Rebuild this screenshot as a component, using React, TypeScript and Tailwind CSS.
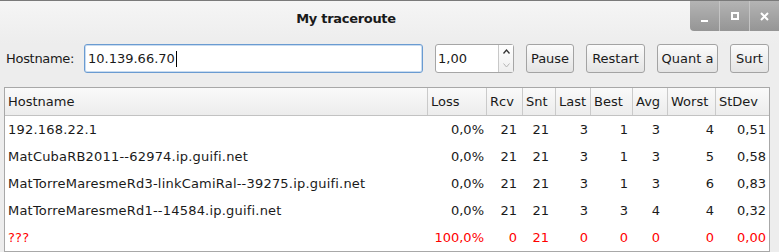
import React from 'react';

const columns = [
  { label: 'Hostname', w: 'w-[423px]', pr: '' },
  { label: 'Loss', w: 'w-[59px]', pr: 'pr-[3px]' },
  { label: 'Rcv', w: 'w-[36px]', pr: 'pr-[6px]' },
  { label: 'Snt', w: 'w-[33px]', pr: 'pr-[7px]' },
  { label: 'Last', w: 'w-[35px]', pr: 'pr-[3px]' },
  { label: 'Best', w: 'w-[42px]', pr: 'pr-[5px]' },
  { label: 'Avg', w: 'w-[35px]', pr: 'pr-[8px]' },
  { label: 'Worst', w: 'w-[48px]', pr: 'pr-[2px]' },
  { label: 'StDev', w: 'w-[53px]', pr: 'pr-[3px]' },
];

const rows = [
  { host: '192.168.22.1', vals: ['0,0%', '21', '21', '3', '1', '3', '4', '0,51'] },
  { host: 'MatCubaRB2011--62974.ip.guifi.net', vals: ['0,0%', '21', '21', '3', '1', '3', '5', '0,58'] },
  { host: 'MatTorreMaresmeRd3-linkCamiRal--39275.ip.guifi.net', vals: ['0,0%', '21', '21', '3', '1', '3', '6', '0,83'] },
  { host: 'MatTorreMaresmeRd1--14584.ip.guifi.net', vals: ['0,0%', '21', '21', '3', '3', '4', '4', '0,32'] },
  { host: '???', vals: ['100,0%', '0', '21', '0', '0', '0', '0', '0,00'], lost: true },
];

const buttons = [
  { label: 'Pause', w: 'w-[48px]' },
  { label: 'Restart', w: 'w-[59px]' },
  { label: 'Quant a', w: 'w-[61px]' },
  { label: 'Surt', w: 'w-[39px]' },
];

const WindowControls: React.FC = () => (
  <div className="flex h-[30px] w-[89px] rounded-bl-[4px] bg-gradient-to-b from-[#b4b4b4] to-[#959595] text-white">
    <div className="flex w-[30px] items-end justify-center border-r border-[#c4c4c4] pb-[9px]">
      <div className="h-[2px] w-[7px] bg-white" />
    </div>
    <div className="flex w-[30px] items-center justify-center border-r border-[#c4c4c4]">
      <div className="h-[8px] w-[8px] border-2 border-white" />
    </div>
    <div className="flex flex-1 items-center justify-center">
      <svg width="9" height="9" viewBox="0 0 9 9">
        <path d="M1 1L8 8M8 1L1 8" stroke="white" strokeWidth="2" />
      </svg>
    </div>
  </div>
);

export default function App() {
  return (
    <div
      className="flex h-[252px] w-[779px] flex-col overflow-hidden border-t border-[#7a7a7a] bg-[#ededed] text-[13px] text-[#1a1a1a]"
      style={{ fontFamily: '"DejaVu Sans", sans-serif' }}
    >
      <div className="flex h-[44px] bg-gradient-to-b from-[#f5f5f5] to-[#ededed]">
        <div className="flex h-[36px] flex-1 items-center justify-center pl-[2px] font-bold tracking-[-0.3px]">
          My traceroute
        </div>
        <WindowControls />
      </div>

      <div className="flex h-[29px] items-center pl-[6px]">
        <span className="w-[78px] tracking-[-0.3px]">Hostname:</span>
        <div className="flex h-[29px] w-[339px] items-center rounded-[3px] border border-[#6a9bd1] bg-white pl-[3px] shadow-[inset_0_0_0_1px_#c9dcf0]">
          <span>10.139.66.70</span>
          <span className="ml-[1px] h-[16px] w-px bg-black" />
        </div>
        <div className="ml-[12px] flex h-[29px] w-[79px] rounded-[3px] border border-[#a6a6a6] bg-white">
          <div className="flex flex-1 items-center pl-[2px]">1,00</div>
          <div className="flex w-[15px] flex-col border-l border-[#c8c8c8] bg-gradient-to-b from-white to-[#eeeeee]">
            <div className="flex flex-1 items-center justify-center">
              <svg width="7" height="5" viewBox="0 0 7 5">
                <path d="M0.5 4.5L3.5 1L6.5 4.5" fill="none" stroke="#333" strokeWidth="1.3" />
              </svg>
            </div>
            <div className="flex flex-1 items-center justify-center">
              <svg width="7" height="5" viewBox="0 0 7 5">
                <path d="M0.5 0.5L3.5 4L6.5 0.5" fill="none" stroke="#b5b5b5" strokeWidth="1" />
              </svg>
            </div>
          </div>
        </div>
        <div className="ml-[12px] flex gap-[12px]">
          {buttons.map((b) => (
            <div
              key={b.label}
              className={`flex h-[29px] ${b.w} items-center justify-center rounded-[3px] border border-[#a3a3a3] bg-gradient-to-b from-[#fbfbfb] to-[#e4e4e4]`}
            >
              {b.label}
            </div>
          ))}
        </div>
      </div>

      <div className="ml-[4px] mt-[14px] w-[766px] flex-1 border border-[#a8a8a8] bg-white">
        <div className="flex h-[28px] border-b border-[#c2c2c2] bg-gradient-to-b from-[#fafafa] to-[#ececec]">
          {columns.map((c) => (
            <div
              key={c.label}
              className={`flex ${c.w} items-center border-r border-[#cacaca] pl-[3px] last:border-r-0`}
            >
              {c.label}
            </div>
          ))}
        </div>
        {rows.map((r) => (
          <div key={r.host} className={`flex h-[27px] items-center ${r.lost ? 'text-[#ff0000]' : ''}`}>
            <div className={`${columns[0].w} pl-[3px] tracking-[0.2px]`}>{r.host}</div>
            {r.vals.map((v, i) => (
              <div key={i} className={`${columns[i + 1].w} ${columns[i + 1].pr} text-right`}>
                {v}
              </div>
            ))}
          </div>
        ))}
      </div>
    </div>
  );
}
